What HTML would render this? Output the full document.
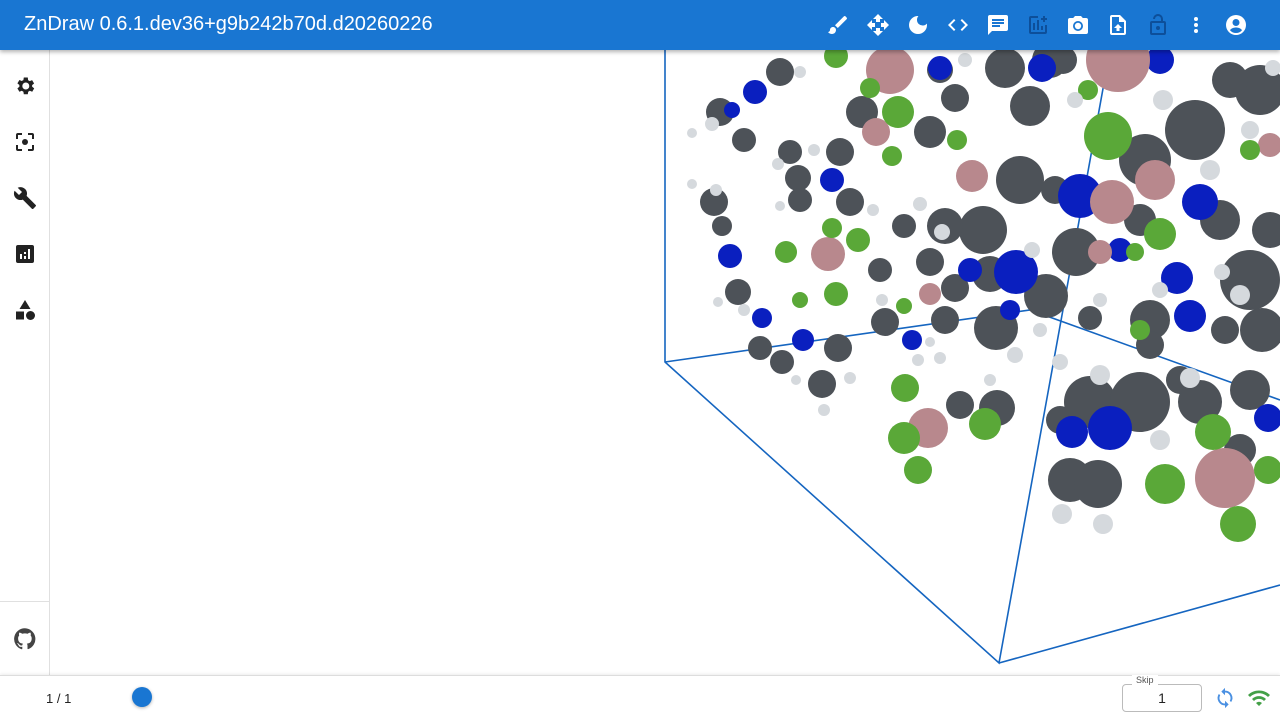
<!DOCTYPE html>
<html><head><meta charset="utf-8"><style>
*{margin:0;padding:0;box-sizing:border-box}
body{width:1280px;height:720px;overflow:hidden;background:#fff;font-family:"Liberation Sans",sans-serif;position:relative}
.top{position:absolute;left:0;top:0;width:1280px;height:50px;background:#1976d2;box-shadow:0 2px 4px rgba(0,0,0,.3);z-index:3}
.top .t{position:absolute;left:24px;top:13px;color:#fff;font-size:20px}
.side{position:absolute;left:0;top:50px;width:50px;height:626px;border-right:1px solid #e0e0e0;background:#fff;z-index:2}
.bot{position:absolute;left:0;top:675px;width:1280px;height:45px;border-top:1px solid #ddd;background:#fff;box-shadow:0 -1px 3px rgba(0,0,0,.08);z-index:2}
svg.i{position:absolute}
</style></head><body>
<svg style="position:absolute;left:0;top:0" width="1280" height="720">
<g stroke="#1565c0" stroke-width="1.6" fill="none">
<path d="M665 50 L665 362 L999 663 L1110 50 M999 663 L1280 585 M665 362 L1030 310 L1280 400"/>
</g>
<g id="m">
<g fill="#4d5258">
<circle cx="780" cy="72" r="14"/><circle cx="720" cy="112" r="14"/><circle cx="744" cy="140" r="12"/><circle cx="790" cy="152" r="12"/><circle cx="798" cy="178" r="13"/><circle cx="800" cy="200" r="12"/><circle cx="840" cy="152" r="14"/><circle cx="862" cy="112" r="16"/><circle cx="850" cy="202" r="14"/><circle cx="904" cy="226" r="12"/><circle cx="930" cy="132" r="16"/><circle cx="955" cy="98" r="14"/><circle cx="940" cy="70" r="13"/><circle cx="1005" cy="68" r="20"/><circle cx="1030" cy="106" r="20"/><circle cx="1020" cy="180" r="24"/><circle cx="983" cy="230" r="24"/><circle cx="945" cy="226" r="18"/><circle cx="930" cy="262" r="14"/><circle cx="955" cy="288" r="14"/><circle cx="990" cy="274" r="18"/><circle cx="996" cy="328" r="22"/><circle cx="945" cy="320" r="14"/><circle cx="885" cy="322" r="14"/><circle cx="838" cy="348" r="14"/><circle cx="822" cy="384" r="14"/><circle cx="760" cy="348" r="12"/><circle cx="782" cy="362" r="12"/><circle cx="738" cy="292" r="13"/><circle cx="714" cy="202" r="14"/><circle cx="722" cy="226" r="10"/><circle cx="880" cy="270" r="12"/><circle cx="1046" cy="296" r="22"/><circle cx="1076" cy="252" r="24"/><circle cx="1090" cy="318" r="12"/><circle cx="1150" cy="320" r="20"/><circle cx="1150" cy="345" r="14"/><circle cx="1090" cy="402" r="26"/><circle cx="1140" cy="402" r="30"/><circle cx="1200" cy="402" r="22"/><circle cx="1250" cy="390" r="20"/><circle cx="1070" cy="480" r="22"/><circle cx="1098" cy="484" r="24"/><circle cx="1195" cy="130" r="30"/><circle cx="1260" cy="90" r="25"/><circle cx="1145" cy="160" r="26"/><circle cx="1220" cy="220" r="20"/><circle cx="1250" cy="280" r="30"/><circle cx="1262" cy="330" r="22"/><circle cx="1240" cy="450" r="16"/><circle cx="1050" cy="60" r="18"/><circle cx="1063" cy="60" r="14"/><circle cx="960" cy="405" r="14"/><circle cx="997" cy="408" r="18"/><circle cx="1055" cy="190" r="14"/><circle cx="1140" cy="220" r="16"/><circle cx="1270" cy="230" r="18"/><circle cx="1090" cy="40" r="0"/><circle cx="1060" cy="420" r="14"/><circle cx="1180" cy="380" r="14"/><circle cx="1230" cy="80" r="18"/><circle cx="1225" cy="330" r="14"/></g>
<g fill="#0a1fbf">
<circle cx="755" cy="92" r="12"/><circle cx="732" cy="110" r="8"/><circle cx="832" cy="180" r="12"/><circle cx="730" cy="256" r="12"/><circle cx="762" cy="318" r="10"/><circle cx="803" cy="340" r="11"/><circle cx="912" cy="340" r="10"/><circle cx="940" cy="68" r="12"/><circle cx="1042" cy="68" r="14"/><circle cx="1080" cy="196" r="22"/><circle cx="1016" cy="272" r="22"/><circle cx="970" cy="270" r="12"/><circle cx="1200" cy="202" r="18"/><circle cx="1177" cy="278" r="16"/><circle cx="1190" cy="316" r="16"/><circle cx="1072" cy="432" r="16"/><circle cx="1110" cy="428" r="22"/><circle cx="1268" cy="418" r="14"/><circle cx="1160" cy="60" r="14"/><circle cx="1120" cy="250" r="12"/><circle cx="1010" cy="310" r="10"/></g>
<g fill="#b8888d">
<circle cx="890" cy="70" r="24"/><circle cx="1118" cy="60" r="32"/><circle cx="876" cy="132" r="14"/><circle cx="972" cy="176" r="16"/><circle cx="1112" cy="202" r="22"/><circle cx="828" cy="254" r="17"/><circle cx="930" cy="294" r="11"/><circle cx="1100" cy="252" r="12"/><circle cx="1155" cy="180" r="20"/><circle cx="928" cy="428" r="20"/><circle cx="1225" cy="478" r="30"/><circle cx="1270" cy="145" r="12"/></g>
<g fill="#5aa838">
<circle cx="836" cy="56" r="12"/><circle cx="870" cy="88" r="10"/><circle cx="898" cy="112" r="16"/><circle cx="892" cy="156" r="10"/><circle cx="1108" cy="136" r="24"/><circle cx="1088" cy="90" r="10"/><circle cx="858" cy="240" r="12"/><circle cx="836" cy="294" r="12"/><circle cx="786" cy="252" r="11"/><circle cx="800" cy="300" r="8"/><circle cx="832" cy="228" r="10"/><circle cx="904" cy="306" r="8"/><circle cx="1160" cy="234" r="16"/><circle cx="1135" cy="252" r="9"/><circle cx="1140" cy="330" r="10"/><circle cx="905" cy="388" r="14"/><circle cx="904" cy="438" r="16"/><circle cx="918" cy="470" r="14"/><circle cx="985" cy="424" r="16"/><circle cx="1213" cy="432" r="18"/><circle cx="1165" cy="484" r="20"/><circle cx="1238" cy="524" r="18"/><circle cx="1268" cy="470" r="14"/><circle cx="957" cy="140" r="10"/><circle cx="1250" cy="150" r="10"/></g>
<g fill="#d5d9dd">
<circle cx="692" cy="133" r="5"/><circle cx="712" cy="124" r="7"/><circle cx="800" cy="72" r="6"/><circle cx="814" cy="150" r="6"/><circle cx="778" cy="164" r="6"/><circle cx="692" cy="184" r="5"/><circle cx="716" cy="190" r="6"/><circle cx="780" cy="206" r="5"/><circle cx="873" cy="210" r="6"/><circle cx="942" cy="232" r="8"/><circle cx="920" cy="204" r="7"/><circle cx="965" cy="60" r="7"/><circle cx="1075" cy="100" r="8"/><circle cx="1163" cy="100" r="10"/><circle cx="1210" cy="170" r="10"/><circle cx="1240" cy="295" r="10"/><circle cx="1222" cy="272" r="8"/><circle cx="1015" cy="355" r="8"/><circle cx="1060" cy="362" r="8"/><circle cx="1100" cy="375" r="10"/><circle cx="1190" cy="378" r="10"/><circle cx="1160" cy="440" r="10"/><circle cx="1062" cy="514" r="10"/><circle cx="1103" cy="524" r="10"/><circle cx="1160" cy="290" r="8"/><circle cx="850" cy="378" r="6"/><circle cx="824" cy="410" r="6"/><circle cx="796" cy="380" r="5"/><circle cx="744" cy="310" r="6"/><circle cx="718" cy="302" r="5"/><circle cx="882" cy="300" r="6"/><circle cx="918" cy="360" r="6"/><circle cx="940" cy="358" r="6"/><circle cx="990" cy="380" r="6"/><circle cx="1032" cy="250" r="8"/><circle cx="1250" cy="130" r="9"/><circle cx="1273" cy="68" r="8"/><circle cx="1040" cy="330" r="7"/><circle cx="1100" cy="300" r="7"/><circle cx="930" cy="342" r="5"/></g>
</g>
</svg>
<div class="top"><div class="t">ZnDraw 0.6.1.dev36+g9b242b70d.d20260226</div>
<svg class="i" style="left:826px;top:13px" width="24" height="24" viewBox="0 0 24 24" fill="#fff"><path d="M7 14c-1.7 0-3 1.3-3 3 0 1.3-1.2 2-2 2 .9 1.2 2.5 2 4 2 2.2 0 4-1.8 4-4 0-1.7-1.3-3-3-3zm13.7-9.4-1.3-1.3a1 1 0 0 0-1.4 0L9 12.3 11.8 15l8.9-8.9a1 1 0 0 0 0-1.4z"/></svg>
<svg class="i" style="left:866px;top:13px" width="24" height="24" viewBox="0 0 24 24" fill="#fff"><path d="M10 9h4V6h3l-5-5-5 5h3v3zm-1 1H6V7l-5 5 5 5v-3h3v-4zm14 2-5-5v3h-3v4h3v3l5-5zm-9 3h-4v3H7l5 5 5-5h-3v-3z"/></svg>
<svg class="i" style="left:906px;top:13px" width="24" height="24" viewBox="0 0 24 24" fill="#fff"><path d="M12 3a9 9 0 1 0 9 9c0-.5 0-1-.1-1.4A5.4 5.4 0 0 1 12.4 3.1 9 9 0 0 0 12 3z"/></svg>
<svg class="i" style="left:946px;top:13px" width="24" height="24" viewBox="0 0 24 24" fill="#fff"><path d="M9.4 16.6 4.8 12l4.6-4.6L8 6l-6 6 6 6 1.4-1.4zm5.2 0 4.6-4.6-4.6-4.6L16 6l6 6-6 6-1.4-1.4z"/></svg>
<svg class="i" style="left:986px;top:13px" width="24" height="24" viewBox="0 0 24 24" fill="#fff"><path d="M20 2H4a2 2 0 0 0-2 2v18l4-4h14a2 2 0 0 0 2-2V4a2 2 0 0 0-2-2zM6 9h12v2H6V9zm8 5H6v-2h8v2zm4-6H6V6h12v2z"/></svg>
<svg class="i" style="left:1026px;top:13px" width="24" height="24" viewBox="0 0 24 24" fill="#0d4f9a"><path d="M19 19H5V5h7V3H5a2 2 0 0 0-2 2v14a2 2 0 0 0 2 2h14a2 2 0 0 0 2-2v-7h-2v7zM7 10h2v7H7zm4-3h2v10h-2zm4 6h2v4h-2zm4-8V3h-2v2h-2v2h2v2h2V7h2V5z"/></svg>
<svg class="i" style="left:1066px;top:13px" width="24" height="24" viewBox="0 0 24 24" fill="#fff"><circle cx="12" cy="13" r="3.2"/><path d="M9 3 7.2 5H4a2 2 0 0 0-2 2v12a2 2 0 0 0 2 2h16a2 2 0 0 0 2-2V7a2 2 0 0 0-2-2h-3.2L15 3H9zm3 15a5 5 0 1 1 0-10 5 5 0 0 1 0 10z"/></svg>
<svg class="i" style="left:1106px;top:13px" width="24" height="24" viewBox="0 0 24 24" fill="#fff"><path d="M14 2H6a2 2 0 0 0-2 2v16a2 2 0 0 0 2 2h12a2 2 0 0 0 2-2V8l-6-6zm4 18H6V4h7v5h5v11zM8 15h2.5v3h3v-3H16l-4-4z"/></svg>
<svg class="i" style="left:1146px;top:13px" width="24" height="24" viewBox="0 0 24 24" fill="#0d4f9a"><path d="M12 17a2 2 0 1 0 0-4 2 2 0 0 0 0 4zm6-9h-1V6a5 5 0 0 0-10 0h2a3 3 0 0 1 6 0v2H6a2 2 0 0 0-2 2v10a2 2 0 0 0 2 2h12a2 2 0 0 0 2-2V10a2 2 0 0 0-2-2zm0 12H6V10h12v10z"/></svg>
<svg class="i" style="left:1184px;top:13px" width="24" height="24" viewBox="0 0 24 24" fill="#fff"><circle cx="12" cy="6" r="2"/><circle cx="12" cy="12" r="2"/><circle cx="12" cy="18" r="2"/></svg>
<svg class="i" style="left:1224px;top:13px" width="24" height="24" viewBox="0 0 24 24" fill="#fff"><path d="M12 2a10 10 0 1 0 0 20 10 10 0 0 0 0-20zm0 4a3.5 3.5 0 1 1 0 7 3.5 3.5 0 0 1 0-7zm0 14a8 8 0 0 1-6-2.8c.8-1.6 3.5-2.7 6-2.7s5.2 1.1 6 2.7A8 8 0 0 1 12 20z"/></svg>
</div>
<div class="side">
<svg class="i" style="left:13px;top:24px" width="24" height="24" viewBox="0 0 24 24" fill="#222"><path d="M19.1 12.9a7 7 0 0 0 0-1.8l2-1.6-2-3.4-2.4 1a7 7 0 0 0-1.6-.9L14.8 3.5h-4l-.4 2.6a7 7 0 0 0-1.6.9l-2.4-1-2 3.4 2 1.6a7 7 0 0 0 0 1.8l-2 1.6 2 3.4 2.4-1c.5.4 1 .7 1.6.9l.4 2.6h4l.4-2.6c.6-.2 1.1-.5 1.6-.9l2.4 1 2-3.4-2-1.6zM12.8 15.5a3.5 3.5 0 1 1 0-7 3.5 3.5 0 0 1 0 7z"/></svg>
<svg class="i" style="left:13px;top:80px" width="24" height="24" viewBox="0 0 24 24" fill="#222"><circle cx="12" cy="12" r="3"/><path d="M5 15H3v4a2 2 0 0 0 2 2h4v-2H5v-4zM5 5h4V3H5a2 2 0 0 0-2 2v4h2V5zm14-2h-4v2h4v4h2V5a2 2 0 0 0-2-2zm0 16h-4v2h4a2 2 0 0 0 2-2v-4h-2v4z"/></svg>
<svg class="i" style="left:13px;top:136px" width="24" height="24" viewBox="0 0 24 24" fill="#222"><path d="M22.7 19 13.6 9.9c.9-2.3.4-5-1.5-6.9-2-2-5-2.4-7.4-1.3L9 6 6 9 1.6 4.7C.4 7.1.9 10.1 2.9 12.1c1.9 1.9 4.6 2.4 6.9 1.5l9.1 9.1c.4.4 1 .4 1.4 0l2.3-2.3c.5-.4.5-1.1.1-1.4z"/></svg>
<svg class="i" style="left:13px;top:192px" width="24" height="24" viewBox="0 0 24 24" fill="#222"><path d="M19 3H5a2 2 0 0 0-2 2v14a2 2 0 0 0 2 2h14a2 2 0 0 0 2-2V5a2 2 0 0 0-2-2zM9 17H7v-5h2v5zm4 0h-2v-3h2v3zm0-5h-2v-2h2v2zm4 5h-2V7h2v10z"/></svg>
<svg class="i" style="left:13px;top:248px" width="24" height="24" viewBox="0 0 24 24" fill="#222"><path d="M12 2 6.5 11h11z"/><circle cx="17.5" cy="17.5" r="4.5"/><path d="M3 13.5h8v8H3z"/></svg>
<div style="position:absolute;left:0;top:551px;width:49px;border-top:1px solid #e0e0e0"></div>
<svg class="i" style="left:13px;top:577px" width="24" height="24" viewBox="0 0 24 24" fill="#444"><path d="M12 1.3a10.7 10.7 0 0 0-3.4 20.9c.5.1.7-.2.7-.5v-1.9c-3 .6-3.6-1.3-3.6-1.3-.5-1.2-1.2-1.6-1.2-1.6-1-.7.1-.7.1-.7 1.1.1 1.6 1.1 1.6 1.1 1 1.7 2.5 1.2 3.1.9.1-.7.4-1.2.7-1.5-2.4-.3-4.9-1.2-4.9-5.3 0-1.2.4-2.1 1.1-2.9-.1-.3-.5-1.4.1-2.9 0 0 .9-.3 2.9 1.1a10 10 0 0 1 5.4 0c2-1.4 2.9-1.1 2.9-1.1.6 1.5.2 2.6.1 2.9.7.8 1.1 1.7 1.1 2.9 0 4.1-2.5 5-4.9 5.3.4.3.7 1 .7 2v2.9c0 .3.2.6.7.5A10.7 10.7 0 0 0 12 1.3z"/></svg>
</div>
<div class="bot">
<div style="position:absolute;left:46px;top:15px;font-size:13px;color:#222">1 / 1</div>
<div style="position:absolute;left:132px;top:11px;width:20px;height:20px;border-radius:50%;background:#1976d2;box-shadow:0 1px 3px rgba(0,0,0,.3)"></div>
<div style="position:absolute;left:1122px;top:8px;width:80px;height:28px;border:1px solid #bbb;border-radius:4px;text-align:center;font-size:14px;line-height:26px;color:#222">1</div>
<div style="position:absolute;left:1132px;top:-1px;padding:0 4px;background:#fff;font-size:9px;color:#555">Skip</div>
<svg class="i" style="left:1214px;top:11px" width="22" height="22" viewBox="0 0 24 24" fill="#4a90e2"><path d="M12 4V1L8 5l4 4V6a6 6 0 0 1 5.2 9l1.5 1.5A8 8 0 0 0 12 4zm0 14a6 6 0 0 1-5.2-9L5.3 7.5A8 8 0 0 0 12 20v3l4-4-4-4v3z"/></svg>
<svg class="i" style="left:1247px;top:10px" width="24" height="24" viewBox="0 0 24 24" fill="#43a047"><path d="m1 9 2 2c5-5 13-5 18 0l2-2C17 3 7 3 1 9zm8 8 3 3 3-3a4.2 4.2 0 0 0-6 0zm-4-4 2 2a7 7 0 0 1 10 0l2-2a10 10 0 0 0-14 0z"/></svg>
</div>
</body></html>
